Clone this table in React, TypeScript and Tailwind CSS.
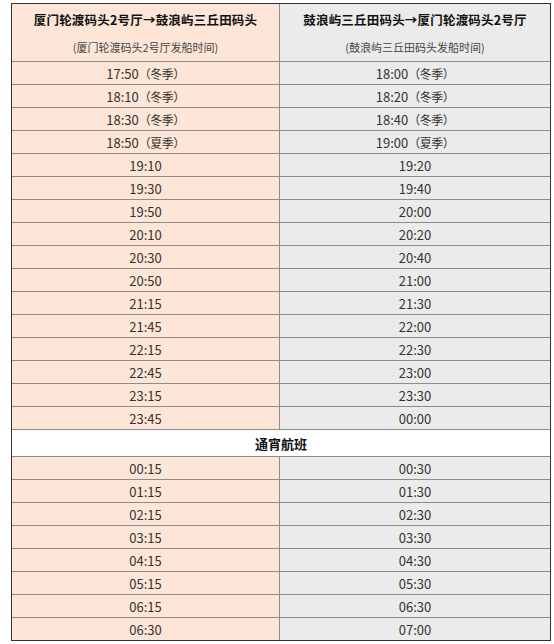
import React from 'react';

const early: [string, string][] = [
    ['17:50|冬季', '18:00|冬季'],
    ['18:10|冬季', '18:20|冬季'],
    ['18:30|冬季', '18:40|冬季'],
    ['18:50|夏季', '19:00|夏季'],
    ['19:10', '19:20'],
    ['19:30', '19:40'],
    ['19:50', '20:00'],
    ['20:10', '20:20'],
    ['20:30', '20:40'],
    ['20:50', '21:00'],
    ['21:15', '21:30'],
    ['21:45', '22:00'],
    ['22:15', '22:30'],
    ['22:45', '23:00'],
    ['23:15', '23:30'],
    ['23:45', '00:00'],
];

const night: [string, string][] = [
    ['00:15', '00:30'],
    ['01:15', '01:30'],
    ['02:15', '02:30'],
    ['03:15', '03:30'],
    ['04:15', '04:30'],
    ['05:15', '05:30'],
    ['06:15', '06:30'],
    ['06:30', '07:00'],
];

// "17:50|冬季" -> 17:50（冬季）
const Cell: React.FC<{ value: string }> = ({ value }) => {
    const [time, season] = value.split('|');
    return (
        <span>
            {time}
            {season && <span className="text-[12px] tracking-[-0.5px]">（{season}）</span>}
        </span>
    );
};

const Row: React.FC<{ left: string; right: string }> = ({ left, right }) => (
    <div className="grid grid-cols-[268px_1fr] h-[23px] border-t border-[#8c8c8c] text-[13px] text-[#333]">
        <div className="bg-[#fde5d8] border-r border-[#8c8c8c] flex items-center justify-center">
            <Cell value={left} />
        </div>
        <div className="bg-[#ebebeb] flex items-center justify-center">
            <Cell value={right} />
        </div>
    </div>
);

const App: React.FC = () => {
    return (
        <div className="w-[554px] h-[644px] bg-white pt-[3px] pl-[11px]" style={{ fontFamily: '"Microsoft YaHei", "Noto Sans CJK SC", sans-serif' }}>
            <div className="w-[540px] border border-[#333] flex flex-col leading-none">
                {/* 表头 */}
                <div className="grid grid-cols-[268px_1fr] h-[57px] text-[#111]">
                    <div className="bg-[#fde5d8] border-r border-[#8c8c8c] flex flex-col items-center pt-[10px]">
                        <div className="text-[12.5px] font-bold tracking-[0.2px]">厦门轮渡码头2号厅→鼓浪屿三丘田码头</div>
                        <div className="text-[11px] text-[#444] mt-[15px]">(厦门轮渡码头2号厅发船时间)</div>
                    </div>
                    <div className="bg-[#ebebeb] flex flex-col items-center pt-[10px]">
                        <div className="text-[12.5px] font-bold tracking-[0.2px]">鼓浪屿三丘田码头→厦门轮渡码头2号厅</div>
                        <div className="text-[11px] text-[#444] mt-[15px]">(鼓浪屿三丘田码头发船时间)</div>
                    </div>
                </div>
                {early.map(([l, r]) => (
                    <Row key={l} left={l} right={r} />
                ))}
                {/* 通宵航班 */}
                <div className="h-[27px] border-t border-[#8c8c8c] bg-white flex items-center justify-center text-[13px] font-bold text-[#111]">
                    通宵航班
                </div>
                {night.map(([l, r]) => (
                    <Row key={l} left={l} right={r} />
                ))}
            </div>
        </div>
    );
};

export default App;
